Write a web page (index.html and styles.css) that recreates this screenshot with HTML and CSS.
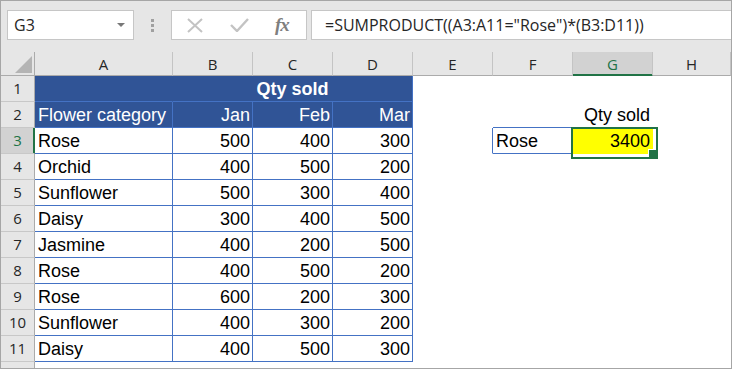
FILE: index.html
```html
<!DOCTYPE html>
<html lang="en">
<head>
    <meta charset="UTF-8">
    <meta name="viewport" content="width=device-width, initial-scale=1.0">
    <title>SUMPRODUCT with criteria</title>
    <link rel="stylesheet" href="styles.css">
</head>
<body>
    <div class="window">
        <div class="toolbar">
            <div class="name-box">
                <span>G3</span>
                <span class="caret"></span>
            </div>
            <div class="grip"><i></i><i></i><i></i></div>
            <div class="fx-buttons">
                <svg class="btn-cancel" width="16" height="15" viewBox="0 0 16 15">
                    <path d="M1 1 L15 14 M15 1 L1 14" stroke="#c3c3c3" stroke-width="2" fill="none"/>
                </svg>
                <svg class="btn-enter" width="19" height="14" viewBox="0 0 19 14">
                    <path d="M1 7 L7 13 L18 1" stroke="#c3c3c3" stroke-width="2.4" fill="none"/>
                </svg>
                <span class="fx">fx</span>
            </div>
            <div class="formula">=SUMPRODUCT((A3:A11="Rose")*(B3:D11))</div>
        </div>

        <div class="sheet">
            <!-- column headers -->
            <div class="hd corner"><span class="tri"></span></div>
            <div class="hd">A</div>
            <div class="hd">B</div>
            <div class="hd">C</div>
            <div class="hd">D</div>
            <div class="hd">E</div>
            <div class="hd">F</div>
            <div class="hd sel">G</div>
            <div class="hd">H</div>

            <!-- row 1 -->
            <div class="rh">1</div>
            <div class="c t blue first"></div>
            <div class="c t blue title">Qty sold</div>
            <div class="c"></div><div class="c"></div><div class="c"></div><div class="c"></div>

            <!-- row 2 -->
            <div class="rh">2</div>
            <div class="c t blue">Flower category</div>
            <div class="c t blue num">Jan</div>
            <div class="c t blue num">Feb</div>
            <div class="c t blue num">Mar</div>
            <div class="c"></div>
            <div class="c above-lookup"></div>
            <div class="c num">Qty sold</div>
            <div class="c"></div>

            <!-- row 3 -->
            <div class="rh sel">3</div>
            <div class="c t">Rose</div>
            <div class="c t num">500</div>
            <div class="c t num">400</div>
            <div class="c t num">300</div>
            <div class="c left-of-lookup"></div>
            <div class="c lookup">Rose</div>
            <div class="c num result">3400</div>
            <div class="c"></div>

            <div class="rh">4</div>
            <div class="c t">Orchid</div>
            <div class="c t num">400</div>
            <div class="c t num">500</div>
            <div class="c t num">200</div>
            <div class="c"></div><div class="c"></div><div class="c"></div><div class="c"></div>

            <div class="rh">5</div>
            <div class="c t">Sunflower</div>
            <div class="c t num">500</div>
            <div class="c t num">300</div>
            <div class="c t num">400</div>
            <div class="c"></div><div class="c"></div><div class="c"></div><div class="c"></div>

            <div class="rh">6</div>
            <div class="c t">Daisy</div>
            <div class="c t num">300</div>
            <div class="c t num">400</div>
            <div class="c t num">500</div>
            <div class="c"></div><div class="c"></div><div class="c"></div><div class="c"></div>

            <div class="rh">7</div>
            <div class="c t">Jasmine</div>
            <div class="c t num">400</div>
            <div class="c t num">200</div>
            <div class="c t num">500</div>
            <div class="c"></div><div class="c"></div><div class="c"></div><div class="c"></div>

            <div class="rh">8</div>
            <div class="c t">Rose</div>
            <div class="c t num">400</div>
            <div class="c t num">500</div>
            <div class="c t num">200</div>
            <div class="c"></div><div class="c"></div><div class="c"></div><div class="c"></div>

            <div class="rh">9</div>
            <div class="c t">Rose</div>
            <div class="c t num">600</div>
            <div class="c t num">200</div>
            <div class="c t num">300</div>
            <div class="c"></div><div class="c"></div><div class="c"></div><div class="c"></div>

            <div class="rh">10</div>
            <div class="c t">Sunflower</div>
            <div class="c t num">400</div>
            <div class="c t num">300</div>
            <div class="c t num">200</div>
            <div class="c"></div><div class="c"></div><div class="c"></div><div class="c"></div>

            <div class="rh">11</div>
            <div class="c t">Daisy</div>
            <div class="c t num">400</div>
            <div class="c t num">500</div>
            <div class="c t num">300</div>
            <div class="c"></div><div class="c"></div><div class="c"></div><div class="c"></div>

            <!-- partly visible row 12 -->
            <div class="rh tail"></div>
            <div class="c tail-row"></div>
        </div>
    </div>
</body>
</html>
```

FILE: styles.css
```css
* {
    box-sizing: border-box;
    margin: 0;
    padding: 0;
}

body {
    background: #fff;
    font-family: "Liberation Sans", Arial, sans-serif;
}

.window {
    width: 732px;
    height: 369px;
    border: 1px solid #a6a6a6;
    background: #e6e6e6;
    overflow: hidden;
}

/* formula bar */
.toolbar {
    display: flex;
    align-items: flex-start;
    height: 51px;
    padding: 9px 0 0 6px;
    font-family: "Open Sans", "Noto Sans", sans-serif;
    font-size: 16px;
    color: #262626;
}

.name-box {
    display: flex;
    align-items: center;
    justify-content: space-between;
    width: 127px;
    height: 30px;
    padding: 0 8px 0 6px;
    background: #fff;
    border: 1px solid #c6c6c6;
    line-height: 28px;
}

.caret {
    width: 0;
    height: 0;
    border-left: 4px solid transparent;
    border-right: 4px solid transparent;
    border-top: 4px solid #787878;
}

.grip {
    display: flex;
    flex-direction: column;
    gap: 2px;
    margin: 9px 17px 0 17px;
}

.grip i {
    display: block;
    width: 3px;
    height: 3px;
    background: #a0a0a0;
}

.fx-buttons {
    display: flex;
    align-items: center;
    width: 136px;
    height: 30px;
    padding-left: 15px;
    background: #fff;
    border: 1px solid #c6c6c6;
}

.btn-cancel {
    margin-top: 1px;
}

.btn-enter {
    margin-left: 27px;
}

.fx {
    margin-left: 26px;
    font-family: "Liberation Serif", serif;
    font-style: italic;
    font-weight: bold;
    font-size: 19px;
    color: #7f7f7f;
    letter-spacing: -1px;
}

.formula {
    flex: 1;
    height: 30px;
    margin-left: 4px;
    padding-left: 13px;
    background: #fff;
    border: 1px solid #c6c6c6;
    border-right: none;
    line-height: 28px;
    white-space: nowrap;
}

/* worksheet */
.sheet {
    display: grid;
    grid-template-columns: 34px 138px repeat(6, 80px) 78px;
    grid-template-rows: 24px repeat(11, 26px) 6px;
    background: #fff;
    font-size: 18px;
    color: #000;
}

.hd {
    background: #e6e6e6;
    border-right: 1px solid #c4c4c4;
    border-bottom: 1px solid #ababab;
    font-family: "Open Sans", "Noto Sans", sans-serif;
    font-size: 15px;
    line-height: 23px;
    padding-top: 1px;
    text-align: center;
    color: #262626;
}

.hd.corner {
    position: relative;
    border-right-color: #ababab;
}

.tri {
    position: absolute;
    right: 2px;
    bottom: 2px;
    width: 0;
    height: 0;
    border-left: 17px solid transparent;
    border-bottom: 17px solid #b4b4b4;
}

.rh {
    background: #e6e6e6;
    border-right: 1px solid #ababab;
    border-bottom: 1px solid #c8c8c8;
    font-family: "Open Sans", "Noto Sans", sans-serif;
    font-size: 15px;
    line-height: 25px;
    text-align: center;
    color: #262626;
}

.hd.sel {
    background: #d2d2d2;
    color: #217346;
    box-shadow: inset 0 -1px #217346;
    border-bottom-color: #217346;
}

.rh.sel {
    background: #d2d2d2;
    color: #217346;
    box-shadow: inset -1px 0 #217346;
    border-right-color: #217346;
}

.rh.tail {
    border-bottom: none;
}

.c {
    border-right: 1px solid transparent;
    border-bottom: 1px solid transparent;
    padding: 1px 3px 0 3px;
    line-height: 24px;
    white-space: nowrap;
    overflow: hidden;
}

.num {
    text-align: right;
    padding-right: 2px;
}

.t {
    border-color: #4472c4;
}

.blue {
    background: #305496;
    color: #fff;
}

.blue.first {
    border-right-color: #305496;
}

.title {
    grid-column: span 3;
    text-align: center;
    font-weight: bold;
}

.above-lookup {
    border-bottom-color: #4472c4;
}

.left-of-lookup {
    border-right-color: #4472c4;
}

.lookup {
    border-right-color: #4472c4;
    border-bottom-color: #4472c4;
}

.result {
    position: relative;
    overflow: visible;
    background: #ffff00;
}

.result::after {
    content: "";
    position: absolute;
    left: -2px;
    top: -1px;
    width: 83px;
    height: 28px;
    border: 2px solid #217346;
}

.result::before {
    content: "";
    position: absolute;
    left: 75px;
    top: 21px;
    width: 7px;
    height: 7px;
    background: #217346;
    border-left: 1px solid #fff;
    border-top: 1px solid #fff;
    z-index: 1;
}

.tail-row {
    grid-column: span 8;
}
```
